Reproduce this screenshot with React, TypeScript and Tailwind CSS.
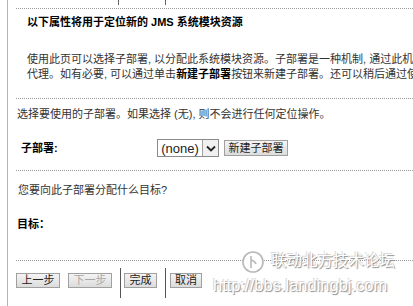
const font = "font-['Liberation_Sans','Noto_Sans_CJK_SC',sans-serif]";

function Dotted({ className = "" }: { className?: string }) {
  return <div className={`border-t border-dotted border-[#9a9a9a] ${className}`} />;
}

function Btn({ label, width, disabled }: { label: string; width: string; disabled?: boolean }) {
  return (
    <div
      className={`${width} h-[15px] mt-[5px] flex items-center justify-center border border-[#a0a0a0] bg-gradient-to-b from-[#f4f4f4] to-[#dcdcdc] text-[11px] leading-none ${
        disabled ? "text-[#a8a8a8]" : "text-[#222]"
      }`}
    >
      {label}
    </div>
  );
}

function Watermark() {
  return (
    <div className="absolute left-[208px] top-[248px] w-[205px] h-[50px] pointer-events-none select-none">
      <div className="flex items-center">
        <svg width="24" height="24" viewBox="0 0 24 24" className="ml-[33px] mt-[2px]">
          <circle cx="12" cy="12" r="10" fill="#fff" stroke="#b8b8b8" strokeWidth="1.6" />
          <path d="M10 6 V18 M10 10 Q14 11 15 14" fill="none" stroke="#b8b8b8" strokeWidth="1.6" />
        </svg>
        <span className="ml-[6px] text-[15.5px] leading-none text-white [text-shadow:1px_1px_1px_#8a8a8a,-1px_-1px_0_#d8d8d8]">
          联动北方技术论坛
        </span>
      </div>
      <div className="ml-[5px] mt-[3px] text-[16.5px] leading-none text-white font-['Liberation_Sans',sans-serif] [text-shadow:1px_1px_1px_#8a8a8a,-1px_-1px_0_#d8d8d8]">
        http://bbs.landingbj.com
      </div>
    </div>
  );
}

export default function App() {
  return (
    <div className={`relative w-[413px] h-[306px] overflow-hidden bg-white ${font} text-[11px]`}>
      <div className="ml-[7px] h-full border-l border-[#b4b4b4] pl-[8px]">
        {/* leftover separators from the bar above */}
        <div className="h-[8px] flex items-start">
          <div className="ml-[102px] w-px h-[5px] bg-[#666]" />
          <div className="ml-[46px] w-px h-[5px] bg-[#666]" />
        </div>
        <Dotted />

        <div className="mt-[6px] pl-[11px] leading-[14px] font-bold text-black whitespace-nowrap">
          以下属性将用于定位新的 JMS 系统模块资源
        </div>

        <div className="mt-[23px] pl-[11px] leading-[15px] text-[#333] whitespace-nowrap">
          <div>使用此页可以选择子部署, 以分配此系统模块资源。子部署是一种机制, 通过此机制可以将资源定位到服务器</div>
          <div>
            代理。如有必要, 可以通过单击<b className="text-black">新建子部署</b>按钮来新建子部署。还可以稍后通过使用子部署选项卡
          </div>
        </div>

        <Dotted className="mt-[16px]" />

        <div className="mt-[8px] pl-[1px] leading-[14px] text-[#333] whitespace-nowrap">
          选择要使用的子部署。如果选择 (无), 则不会进行任何定位操作。
        </div>

        <div className="mt-[18px] h-[18px] flex items-center">
          <div className="w-[141px] pl-[5px] font-bold text-black">子部署:</div>
          <div className="h-[18px] flex border border-[#8a8a8a] bg-white">
            <div className="w-[44px] flex items-center justify-center text-[13px] text-[#222] leading-none">(none)</div>
            <div className="w-[16px] flex items-center justify-center border-l border-[#a0a0a0] bg-[#f0f0f0]">
              <svg width="10" height="7" viewBox="0 0 10 7">
                <path d="M1 1.5 L5 5.5 L9 1.5" fill="none" stroke="#222" strokeWidth="1.8" />
              </svg>
            </div>
          </div>
          <div className="ml-[5px] w-[64px] h-[16px] flex items-center justify-center border border-[#a0a0a0] bg-gradient-to-b from-[#f4f4f4] to-[#dcdcdc] text-[11px] text-[#222] leading-none">
            新建子部署
          </div>
        </div>

        <Dotted className="mt-[13px]" />

        <div className="mt-[12px] pl-[2px] leading-[14px] text-[#333] whitespace-nowrap">
          您要向此子部署分配什么目标?
        </div>

        <div className="mt-[20px] pl-[1px] leading-[14px] font-bold text-black">目标：</div>

        <Dotted className="mt-[29px]" />

        <div className="mt-[7px] h-[30px] flex items-start">
          <Btn label="上一步" width="w-[44px]" />
          <div className="ml-[8px]">
            <Btn label="下一步" width="w-[44px]" disabled />
          </div>
          <div className="ml-[8px] w-px h-[30px] bg-[#555]" />
          <div className="ml-[3px]">
            <Btn label="完成" width="w-[33px]" />
          </div>
          <div className="ml-[8px] w-px h-[30px] bg-[#555]" />
          <div className="ml-[4px]">
            <Btn label="取消" width="w-[32px]" />
          </div>
        </div>
      </div>
      <Watermark />
    </div>
  );
}
